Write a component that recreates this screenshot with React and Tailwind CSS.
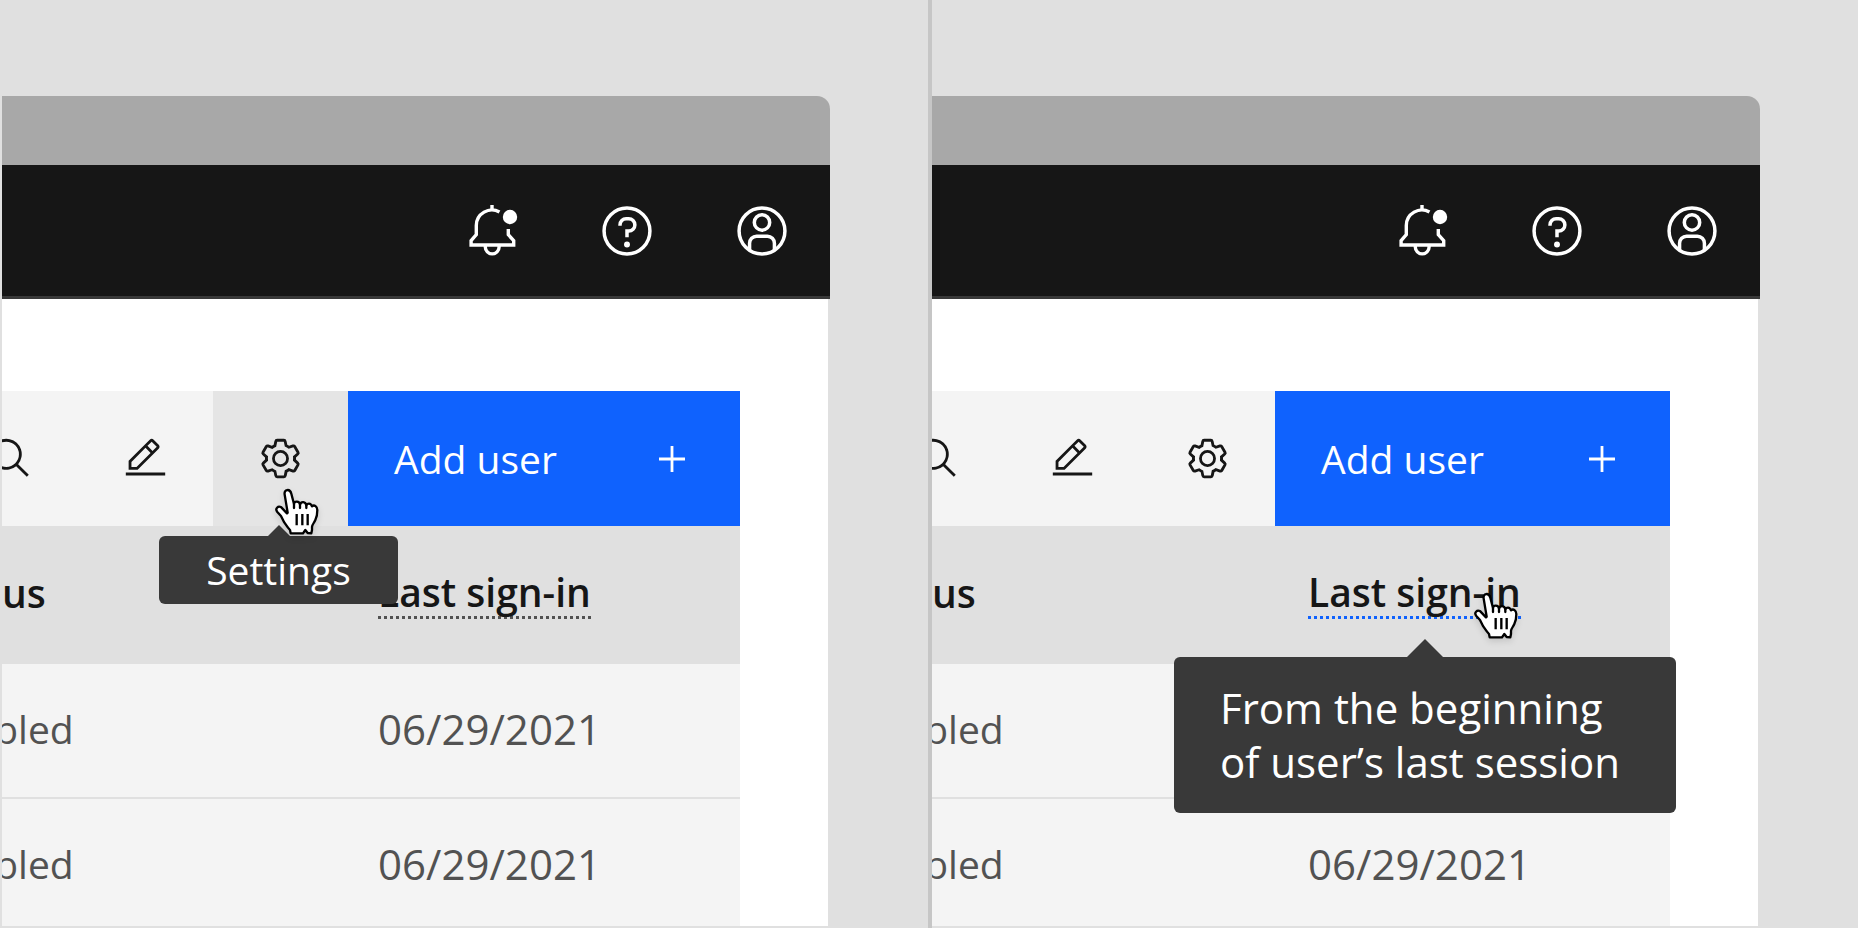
function BellIcon() {
  return (
    <svg viewBox="0 0 56 56" className="size-14" fill="none" stroke="currentColor" strokeWidth="3.4" aria-hidden="true">
      <path d="M35.5 9A15.6 15.6 0 0 0 12.3 22.5V31.7L7.1 37.6V42H49.7V37.6L44.3 31.7V26" />
      <path d="M28 2V7" />
      <path d="M21.3 43v1a6.9 6.9 0 0 0 13.8 0v-1" />
      <circle cx="46" cy="14" r="7.2" fill="currentColor" stroke="none" />
    </svg>
  );
}

function HelpIcon() {
  return (
    <svg viewBox="0 0 32 32" className="size-14" fill="currentColor" aria-hidden="true">
      <circle cx="16" cy="16" r="13.1" fill="none" stroke="currentColor" strokeWidth="2" />
      <circle cx="16" cy="23.7" r="1.7" />
      <path d="M17 8H15.5A4.49 4.49 0 0 0 11 12.5V13h2v-.5A2.5 2.5 0 0 1 15.5 10H17a2.5 2.5 0 0 1 0 5H15v4.5h2V17a4.5 4.5 0 0 0 0-9Z" />
    </svg>
  );
}

function UserIcon() {
  return (
    <svg viewBox="0 0 32 32" className="size-14" fill="none" stroke="currentColor" strokeWidth="2" aria-hidden="true">
      <circle cx="16" cy="16" r="13.1" />
      <circle cx="16" cy="11.1" r="4.4" />
      <path d="M8.9 26.8V23a4 4 0 0 1 4-4h6.2a4 4 0 0 1 4 4v3.8" />
    </svg>
  );
}

function SearchIcon() {
  return (
    <svg viewBox="0 0 32 32" className="size-[45px]" fill="currentColor" aria-hidden="true">
      <path d="M29 27.5859l-7.5521-7.5521a11.0177 11.0177 0 1 0-1.4141 1.4141L27.5859 29ZM4 13a9 9 0 1 1 9 9A9.01 9.01 0 0 1 4 13Z" />
    </svg>
  );
}

function EditIcon() {
  return (
    <svg viewBox="0 0 32 32" className="size-[45px]" fill="currentColor" aria-hidden="true">
      <path d="M2 26H30V28H2z" />
      <path d="M25.4 9c.8-.8.8-2 0-2.8l-3.6-3.6c-.8-.8-2-.8-2.8 0l-15 15V24h6.4L25.4 9zM20.4 4L24 7.6l-3 3L17.4 7L20.4 4zM6 22v-3.6l10-10l3.6 3.6l-10 10H6z" />
    </svg>
  );
}

function SettingsIcon() {
  return (
    <svg viewBox="0 0 32 32" className="size-[45px]" fill="currentColor" aria-hidden="true">
      <path d="M27,16.76c0-.25,0-.5,0-.76s0-.51,0-.77l1.92-1.68A2,2,0,0,0,29.3,11L26.94,7a2,2,0,0,0-1.73-1,2,2,0,0,0-.64.1l-2.43.82a11.35,11.35,0,0,0-1.31-.75l-.51-2.52a2,2,0,0,0-2-1.61H13.64a2,2,0,0,0-2,1.61l-.51,2.52a11.48,11.48,0,0,0-1.32.75L7.43,6.06A2,2,0,0,0,6.79,6,2,2,0,0,0,5.06,7L2.7,11a2,2,0,0,0,.41,2.51L5,15.24c0,.25,0,.5,0,.76s0,.51,0,.77L3.11,18.45A2,2,0,0,0,2.7,21L5.06,25a2,2,0,0,0,1.73,1,2,2,0,0,0,.64-.1l2.43-.82a11.35,11.35,0,0,0,1.31.75l.51,2.52a2,2,0,0,0,2,1.61h4.72a2,2,0,0,0,2-1.61l.51-2.52a11.48,11.48,0,0,0,1.32-.75l2.42.82a2,2,0,0,0,.64.1,2,2,0,0,0,1.73-1L29.3,21a2,2,0,0,0-.41-2.51ZM25.21,24l-3.43-1.16a8.86,8.86,0,0,1-2.71,1.57L18.36,28H13.64l-.71-3.55a9.36,9.36,0,0,1-2.7-1.57L6.79,24,4.43,20l2.72-2.4a8.9,8.9,0,0,1,0-3.13L4.43,12,6.79,8l3.43,1.16a8.86,8.86,0,0,1,2.71-1.57L13.64,4h4.72l.71,3.55a9.36,9.36,0,0,1,2.7,1.57L25.21,8,27.57,12l-2.72,2.4a8.9,8.9,0,0,1,0,3.13L27.57,20Z" />
      <path d="M16,22a6,6,0,1,1,6-6A5.94,5.94,0,0,1,16,22Zm0-10a3.91,3.91,0,0,0-4,4,3.91,3.91,0,0,0,4,4,3.91,3.91,0,0,0,4-4A3.91,3.91,0,0,0,16,12Z" />
    </svg>
  );
}

function PlusIcon() {
  return (
    <svg viewBox="0 0 26 26" className="size-[26px]" stroke="currentColor" strokeWidth="2.8" aria-hidden="true">
      <path d="M13 0V26M0 13H26" />
    </svg>
  );
}

function HandPointer({ className }) {
  return (
    <svg
      viewBox="33 27 129 138"
      className={`pointer-events-none absolute z-20 h-[46px] w-[43px] overflow-visible drop-shadow-md ${className}`}
      fill="#ffffff"
      stroke="#000000"
      strokeWidth="7"
      strokeLinejoin="round"
      strokeLinecap="round"
      aria-hidden="true"
    >
      <path d="M71 98L62 44C59 27 78 25 82 41L90 72C91 62 106 62 108 74C111 63 125 64 127 76C130 70 140 68 144 79C151 73 160 80 160 90C160 102 158 112 154 120C150 129 146 132 144 140V150L142 160L131 159L124 150L117 160H80L78 150C70 142 66 134 60 126L51 108L40 96C32 86 42 76 52 82L69 100Z" />
      <path d="M90 72V84M108 74V84M127 77V84" fill="none" />
      <path d="M98 102V136M115 102V136M131 102V136" fill="none" strokeLinecap="butt" />
    </svg>
  );
}

function IconButton({ label, children, active = false, extra }) {
  return (
    <div className={`relative flex w-[135px] shrink-0 ${active ? 'bg-[#e5e5e5]' : ''}`}>
      <button type="button" aria-label={label} className="flex flex-1 items-center justify-center text-[#161616]">
        {children}
      </button>
      {extra}
    </div>
  );
}

function ShellHeader() {
  return (
    <header className="flex h-[134px] shrink-0 items-stretch justify-end border-b-3 border-[#393939] bg-[#161616] pr-px text-white">
      <button type="button" aria-label="Notifications" className="flex w-[135px] items-center justify-center">
        <BellIcon />
      </button>
      <button type="button" aria-label="Help" className="flex w-[135px] items-center justify-center">
        <HelpIcon />
      </button>
      <button type="button" aria-label="Account" className="flex w-[135px] items-center justify-center">
        <UserIcon />
      </button>
    </header>
  );
}

function SettingsTooltip() {
  return (
    <>
      <div
        role="tooltip"
        className="absolute top-[145px] -right-[50px] z-10 w-[239px] rounded-md bg-[#393939] py-[10px] text-center text-[39px] leading-[48px] text-white"
      >
        Settings
        <svg viewBox="0 0 22 11" className="absolute bottom-full left-1/2 h-[11px] w-[22px] -translate-x-1/2" aria-hidden="true">
          <path d="M0 11L11 0L22 11Z" fill="#393939" />
        </svg>
      </div>
      <HandPointer className="top-[98px] left-[62px]" />
    </>
  );
}

function SignInTooltip() {
  return (
    <>
      <div
        role="tooltip"
        className="absolute top-[131px] -right-[6px] z-10 w-[502px] rounded-md bg-[#393939] px-[46px] py-6 text-left text-[42px] leading-[54px] font-normal whitespace-nowrap text-white"
      >
        From the beginning
        <br />
        of user’s last session
        <svg viewBox="0 0 36 18" className="absolute bottom-full left-1/2 h-[18px] w-9 -translate-x-1/2" aria-hidden="true">
          <path d="M0 18L18 0L36 18Z" fill="#393939" />
        </svg>
      </div>
      <HandPointer className="top-[67px] left-[210px]" />
    </>
  );
}

const rows = [
  { id: 1, status: 'Enabled', signIn: '06/29/2021' },
  { id: 2, status: 'Enabled', signIn: '06/29/2021' },
];

function Screen({ tooltip, className }) {
  const settingsOpen = tooltip === 'settings';
  const signInOpen = tooltip === 'sign-in';
  return (
    <section className={`flex min-w-0 flex-col overflow-hidden bg-[#e0e0e0] pt-24 pb-[2px] ${className}`}>
      <div className="mr-[98px] flex min-h-0 flex-1 flex-col overflow-hidden rounded-tr-[13px]">
        <div className="h-[69px] shrink-0 bg-[#a8a8a8]" />
        <ShellHeader />
        <main className="mr-[2px] flex-1 bg-white pt-[92px] pr-[88px]">
          <div className="flex h-[135px] justify-end bg-[#f4f4f4]">
            <IconButton label="Search">
              <SearchIcon />
            </IconButton>
            <IconButton label="Edit">
              <EditIcon />
            </IconButton>
            <IconButton label="Settings" active={settingsOpen} extra={settingsOpen && <SettingsTooltip />}>
              <SettingsIcon />
            </IconButton>
            <button
              type="button"
              className={`flex shrink-0 items-center justify-between bg-[#0f62fe] pr-[55px] pl-[46px] text-[39px] leading-[48px] text-white ${settingsOpen ? 'w-[392px]' : 'w-[395px]'}`}
            >
              Add user
              <PlusIcon />
            </button>
          </div>
          <div className="flex justify-end">
            <table className="w-[838px] shrink-0 table-fixed border-separate border-spacing-0 text-left text-[39px] leading-[48px]">
              <thead>
                <tr className="h-[138px] bg-[#e0e0e0] text-[#161616]">
                  <th scope="col" className="w-[432px] pb-1 pl-[25px] font-semibold">
                    Status
                  </th>
                  <th scope="col" className="relative pb-1 pl-11 font-semibold">
                    <button
                      type="button"
                      className={`block border-b-3 border-dotted ${signInOpen ? 'border-[#0f62fe]' : 'border-[#525252]'}`}
                    >
                      Last sign-in
                    </button>
                    {signInOpen && <SignInTooltip />}
                  </th>
                </tr>
              </thead>
              <tbody>
                {rows.map((row) => (
                  <tr key={row.id} className="h-[135px] bg-[#f4f4f4] text-[#525252]">
                    <td className="border-b-2 border-[#e0e0e0] pb-1 pl-[25px]">{row.status}</td>
                    <td className="border-b-2 border-[#e0e0e0] pb-1 pl-11 text-[42px] leading-[48px]">{row.signIn}</td>
                  </tr>
                ))}
              </tbody>
            </table>
          </div>
        </main>
      </div>
    </section>
  );
}

export default function App() {
  return (
    <div className="grid h-screen grid-cols-[932fr_926fr] bg-[#e0e0e0] font-['Open_Sans','Noto_Sans',sans-serif]">
      <Screen tooltip="settings" className="border-r-4 border-[#c6c6c6] pl-[2px]" />
      <Screen tooltip="sign-in" className="" />
    </div>
  );
}
